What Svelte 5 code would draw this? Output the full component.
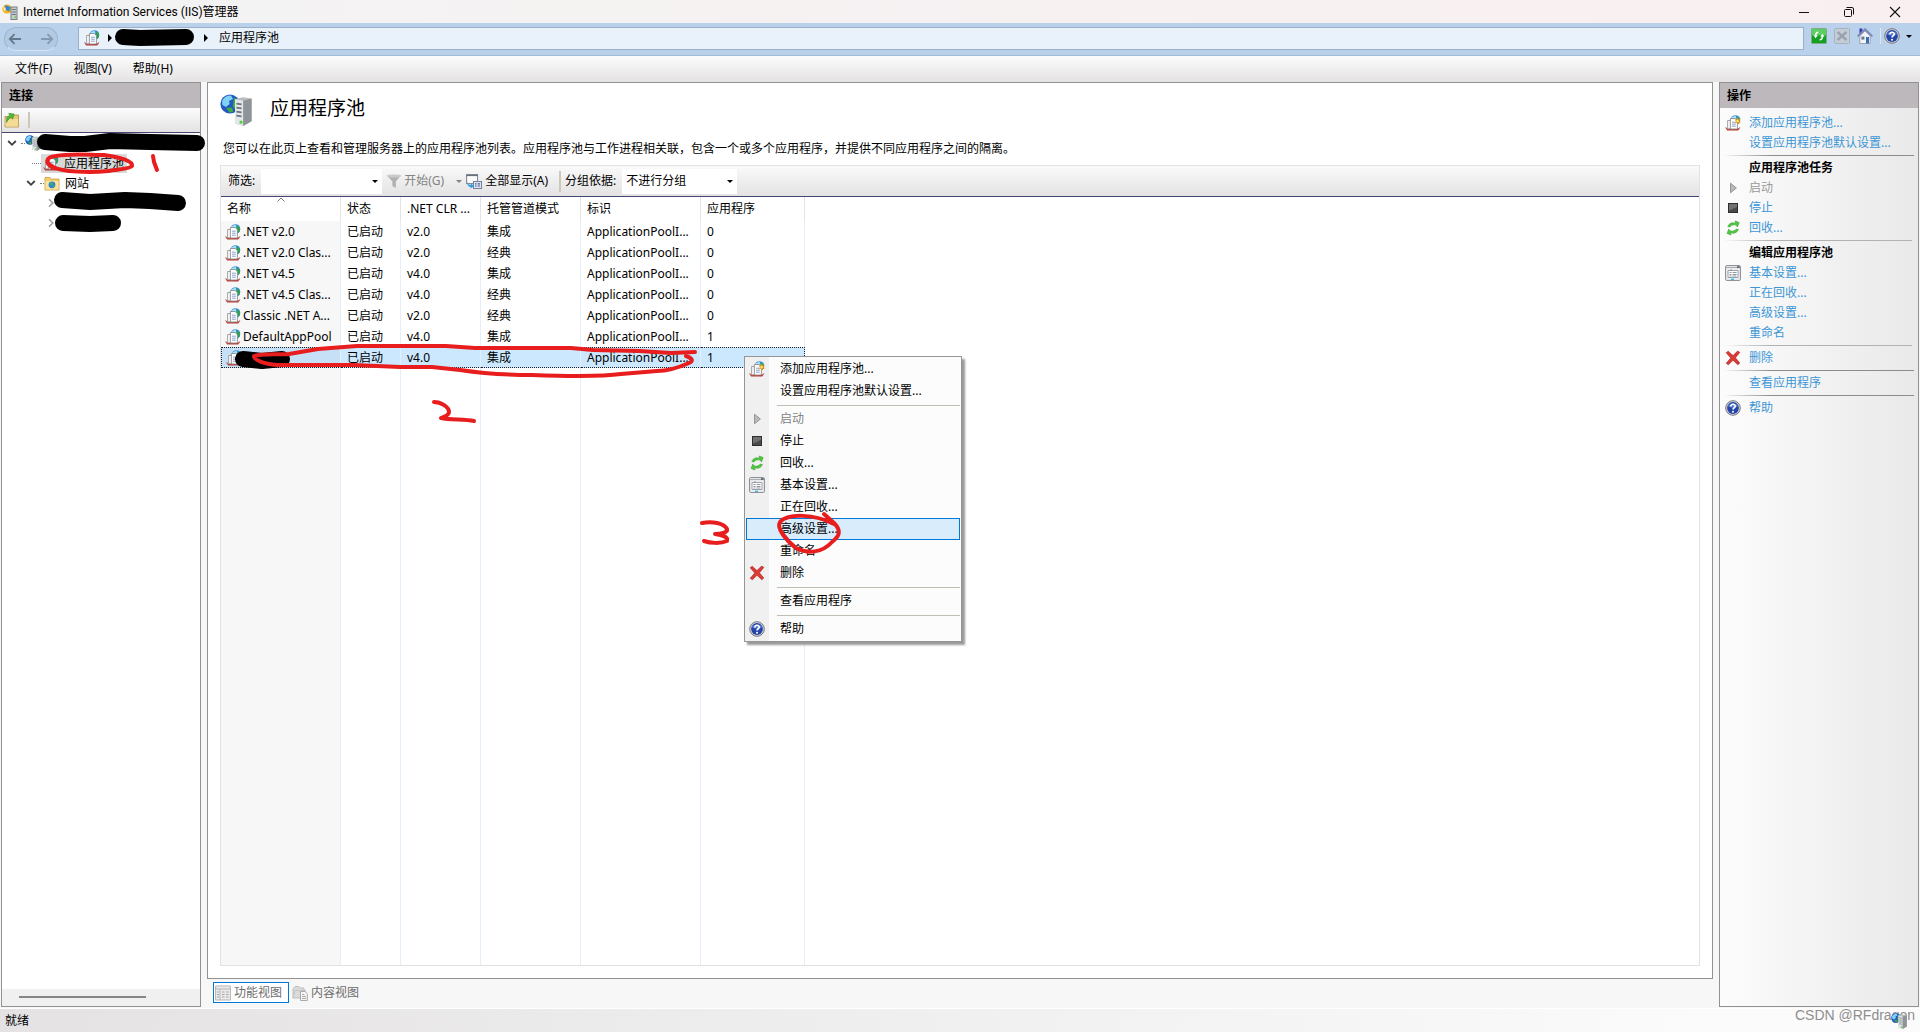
<script>
    const columns = ['名称', '状态', '.NET CLR ...', '托管管道模式', '标识', '应用程序'];

    const pools = [
        { name: '.NET v2.0', clr: 'v2.0', mode: '集成', apps: 0 },
        { name: '.NET v2.0 Clas...', clr: 'v2.0', mode: '经典', apps: 0 },
        { name: '.NET v4.5', clr: 'v4.0', mode: '集成', apps: 0 },
        { name: '.NET v4.5 Clas...', clr: 'v4.0', mode: '经典', apps: 0 },
        { name: 'Classic .NET A...', clr: 'v2.0', mode: '经典', apps: 0 },
        { name: 'DefaultAppPool', clr: 'v4.0', mode: '集成', apps: 1 },
        { name: '', clr: 'v4.0', mode: '集成', apps: 1 },
    ];

    const actions = [
        { text: '添加应用程序池...', icon: 'poolAdd' },
        { text: '设置应用程序池默认设置...' },
        { line: 'strong' },
        { heading: '应用程序池任务' },
        { text: '启动', icon: 'play', disabled: true },
        { text: '停止', icon: 'stop' },
        { text: '回收...', icon: 'recycle' },
        { line: 'soft' },
        { heading: '编辑应用程序池' },
        { text: '基本设置...', icon: 'settings' },
        { text: '正在回收...' },
        { text: '高级设置...' },
        { text: '重命名' },
        { line: 'soft' },
        { text: '删除', icon: 'remove' },
        { line: 'strong' },
        { text: '查看应用程序' },
        { line: 'strong' },
        { text: '帮助', icon: 'help' },
    ];

    // the context menu has the same entries without the headings
    const menu = [
        ...actions.slice(0, 3),
        ...actions.slice(4, 7),
        ...actions.slice(9, 13),
        ...actions.slice(14),
    ];

    let selected = $state(6);
    let hovered = $state('高级设置...');
</script>

{#snippet globe()}
    <circle cx="5" cy="5" r="4.8" fill="#2458c4" />
    <path d="M1 3.5C2 1.5 4 .6 5.5 .8L6.5 2.5 4.5 3.5 4.8 5 3 6.5 1.2 5.5Z" fill="#7fd3f4" />
    <path d="M7 1.6 9 3.5 9.4 6 7.6 7.6 6.4 6.2ZM3 7 6 6.8 6.6 8.8 5 9.4Z" fill="#3fae3a" />
{/snippet}

{#snippet icon(name, size = 16)}
    <svg class="icon" width={size} height={size} viewBox="0 0 16 16" aria-hidden="true">
        {#if name === 'server'}
            {@render globe()}
            <path d="M7.5 2.6 11.4 1.6 15.8 2.2V13.6L11.6 16 7.5 14.8Z" fill="#b9bdc0" />
            <path d="M7.5 2.6 11.6 3.4V16L7.5 14.8Z" fill="#e3e7ea" />
            <path d="M11.6 3.4 15.8 2.2V13.6L11.6 16Z" fill="#8f9498" />
            <path d="M8.2 4.8 10.8 5.2M8.2 6.8 10.8 7.2M8.2 8.8 10.8 9.2M8.2 10.8 10.8 11.2" stroke="#6d757b" stroke-width=".8" />
            <path d="M9.8 13.4h1.4v1.4H9.8z" fill="#4fd22f" />
        {:else if name === 'app'}
            <circle cx="5" cy="5" r="4.6" fill="#f2b21b" />
            <path d="M3 1 8.5 3 7 7.5 4 6Z" fill="#2f86d8" />
            <path d="M1 2.5 4 5 2.5 7.500Z" fill="#fff3bd" />
            <rect x="9" y="3" width="6" height="12.5" fill="#c5ccd0" stroke="#788087" />
            <path d="M10.2 5.5h3.6M10.2 8h3.6M10.2 10.5h3.6" stroke="#69737a" />
            <path d="M12.5 12.5h1.5v1.5h-1.5z" fill="#4fd22f" />
        {:else if name === 'pool' || name === 'poolAdd'}
            <circle cx="10.5" cy="5" r="4.8" fill="#3b8bdc" />
            <path d="M6.5 2.5 10.5 .4 11.4 3.5 8 5.5Z" fill="#a8e6f4" />
            <path d="M12 1.200 15 3.5 14.8 7.5 12.4 9Z" fill="#2fa34c" />
            <path d="M.6 12.6 2.2 15.2H13.2L15 12.6 13 13.8H2.6Z" fill="#d2322b" stroke="#b04540" stroke-width=".5" />
            <path d="M2.6 5.5h6v8.300h-6z" fill="#f7f7f7" stroke="#8f8f8f" stroke-width=".8" />
            <path d="M5.4 3.5h4.8l2.2 2.2v8.3h-7z" fill="#fff" stroke="#828282" stroke-width=".8" />
            <path d="M7 7.2h3.8M7 9.2h3.8M7 11.2h3.8" stroke="#6b8bc6" stroke-width=".8" />
            {#if name === 'poolAdd'}
                <path d="M12.5 2 13.2 4.4 15.6 3.8 14.2 5.8 16 7.4 13.6 7.4 13 10 11.8 7.8 9.4 8.4 11 6.4 9.6 4.4 11.8 4.6Z" fill="#f59a1c" />
                <circle cx="12.6" cy="6" r="1.2" fill="#ffe169" />
            {/if}
        {:else if name === 'play'}
            <path d="M5.5 3.2 11.4 8 5.5 12.8Z" fill="#b9b9b9" stroke="#979797" />
        {:else if name === 'stop'}
            <rect x="3.5" y="3.5" width="9" height="9" fill="#4a4a4a" stroke="#2e2e2e" />
            <path d="M4 4h8v3L4 10.5Z" fill="#717171" />
        {:else if name === 'recycle'}
            <path d="M2.8 6.5C4 3 8 2 10.5 3.4L10.2 1 14.2 2.6 12.4 7 11.4 5.2C8.6 4.4 6 5 5 7Z" fill="#4fc93d" stroke="#2c9526" stroke-width=".5" />
            <path d="M13.4 9.5C12.2 13 8.2 14 5.7 12.6L6 15 2 13.4 3.8 9 4.8 10.8C7.6 11.600 10.2 11 11.2 9Z" fill="#4fc93d" stroke="#2c9526" stroke-width=".5" />
        {:else if name === 'settings'}
            <rect x=".6" y=".6" width="14.8" height="14.8" rx="1" fill="#eef0f2" stroke="#84888d" />
            <path d="M1 2.6h14" stroke="#a4a8ae" />
            <path d="M12 1.2h2.6v1.6H12z" fill="#555b63" />
            <path d="M3 5.5h10v7H3z" fill="#fff" stroke="#9aa0a8" />
            <path d="M4.5 7.5h2M4.5 9.5h2M4.5 11h2M7.5 7.5h4M7.5 9.5h4M7.5 11h4M6 4v1.5" stroke="#848b95" stroke-width=".9" />
            <path d="M6 13.6h3v1.4H6z" fill="#38b9e8" />
        {:else if name === 'remove'}
            <path d="M1.2 2.8 3.2 1.2 8 5.6 12.6 1 14.8 2.4 10.4 7.8 14.8 13 12.8 14.8 8 10.2 3.4 14.8 1.2 13.2 5.8 8Z" fill="#dc3a35" stroke="#a51f1f" stroke-width=".6" />
        {:else if name === 'help'}
            <circle cx="8" cy="8" r="7.3" fill="#d5d5d8" stroke="#77787e" />
            <circle cx="8" cy="8" r="5.9" fill="#2345a8" />
            <path d="M3 6C4 2.5 12 2.5 13 6 11 8 5 8 3 6Z" fill="#5c80d6" />
            <path d="M5.8 6.4C5.8 3.4 10.4 3.6 10.2 6.3 10 7.8 8 7.8 8 9.6" fill="none" stroke="#fff" stroke-width="1.6" />
            <circle cx="8" cy="11.8" r="1" fill="#fff" />
        {:else if name === 'refresh'}
            <rect x=".5" y=".5" width="15" height="15" rx="1" fill="#29b53a" stroke="#7fa98a" />
            <path d="M1 1h14v6H1z" fill="#5dce62" />
            <path d="M1 8h14v7H1z" fill="#14a023" />
            <path d="M7.4 4.2C5 4.2 4.6 5.5 4.6 7.5M8.6 11.8C11 11.8 11.4 10.5 11.4 8.5" fill="none" stroke="#fff" stroke-width="1.4" />
            <path d="M2.4 7.2h4.4L4.6 10.2ZM9.2 8.8h4.4L11.4 5.800Z" fill="#fff" />
        {:else if name === 'cancel'}
            <rect x=".5" y=".5" width="15" height="15" rx="1" fill="#c4ccd5" stroke="#a7b2bf" />
            <path d="M3.5 4 12.5 12M12.5 4 3.5 12" stroke="#9aa4af" stroke-width="2.4" />
        {:else if name === 'home'}
            <path d="M2.8 8 8 3 13.2 8v7.5H2.8Z" fill="#f2f4f8" stroke="#8e96a6" stroke-width=".8" />
            <path d="M2.5 .5h2.8v4L2.5 7Z" fill="#2f3fb0" />
            <path d="M.6 8.4 8 1.2 15.4 8.4" fill="none" stroke="#7984b4" stroke-width="1.8" />
            <path d="M4.4 8.6h3v3h-3z" fill="#6d7990" />
            <path d="M9 9h3v6.5H9z" fill="#3a6fb8" />
        {:else if name === 'sites'}
            <path d="M1 2.5h5l1.4 1.6H15V15H1Z" fill="#f3cf72" stroke="#c89a3c" stroke-width=".8" />
            <path d="M1.5 6h13v8.5h-13z" fill="#fae49c" />
            <circle cx="8" cy="9.8" r="3.4" fill="#2f7fd0" />
            <path d="M6 8 8.4 7.2 8.6 9.6 6.8 10.8ZM8.5 11 10.6 9.6 10 12.4Z" fill="#4cbf58" />
        {:else if name === 'folder'}
            <path d="M1 4.500h5l1-1.500h7.500V15H1Z" fill="#e9c675" stroke="#b38e45" stroke-width=".8" />
            <path d="M1.5 7h12.6v7.6H1.5z" fill="#f4dc97" />
            <path d="M2.6 10.4C2.2 6.5 3.4 4.2 5.6 3.4L4.800 1.400 10.2 2 8.600 7.200 7.400 5.400C5.4 6 4 7.6 2.6 10.4Z" fill="#4cbd36" stroke="#2b8a22" stroke-width=".6" />
        {:else if name === 'filter'}
            <path d="M1 2.5H15L9.8 8.5V15L6.4 13V8.5Z" fill="#b0b0b0" />
            <ellipse cx="8" cy="3" rx="7" ry="1.6" fill="#c9c9c9" />
        {:else if name === 'showAll'}
            <rect x=".6" y="1.6" width="11" height="9" fill="#fafafa" stroke="#7a828c" />
            <path d="M.6 2.4h11" stroke="#67707c" stroke-width="1.4" />
            <rect x="7.5" y="8.5" width="8" height="7" fill="#dfe5ef" stroke="#7380a0" />
            <path d="M9 10.8h1.6M11.6 10.8h2.4M9 13h1.6M11.6 13h2.4" stroke="#4b5f9a" stroke-width="1.2" />
            <path d="M1 8.5C1.6 11.2 3 12 4.6 12V10.4L8.2 13 4.6 15.6V14C2 13.8 1 11.4 1 8.5Z" fill="#2f9be0" />
        {:else if name === 'features'}
            <path d="M.6 1h14.8v14H.6z" fill="#ececec" stroke="#b4b4b4" />
            <path d="M.6 4h14.8M5 4v11" stroke="#b4b4b4" />
            <path d="M2 7h2M2 9.5h2M2 12h2M7 7h2.6M11 7h2.6M7 9.5h2.6M11 9.5h2.6M7 12h2.6M11 12h2.6" stroke="#a4a4a4" />
        {:else if name === 'content'}
            <path d="M1 4 3 1.6H7L8 3H12V13H1Z" fill="#dadada" stroke="#bdbdbd" />
            <path d="M.8 13 3.2 5.5H14" fill="none" stroke="#c4c4c4" />
            <path d="M8.5 6.5h4.6l2.2 2.2v6.8H8.5z" fill="#f7f7f7" stroke="#a9a9a9" />
            <path d="M10 9.5h2.4M10 11.5h4M10 13.5h4" stroke="#a9a9a9" />
        {/if}
    </svg>
{/snippet}

{#snippet chevron(open)}
    <svg class="chevron" width="10" height="10" viewBox="0 0 10 10" aria-hidden="true">
        {#if open}
            <path d="M1.2 3 5 6.8 8.8 3" fill="none" stroke="#404040" stroke-width="1.8" />
        {:else}
            <path d="M3 1.2 6.8 5 3 8.8" fill="none" stroke="#a0a0a0" stroke-width="1.6" />
        {/if}
    </svg>
{/snippet}

<div class="window">
    <header class="titlebar">
        {@render icon('app')}
        <span class="caption">Internet Information Services (IIS)管理器</span>
        <button class="win" aria-label="最小化">
            <svg width="12" height="12" viewBox="0 0 12 12"><path d="M1 6.5h10" stroke="#111" /></svg>
        </button>
        <button class="win" aria-label="还原">
            <svg width="12" height="12" viewBox="0 0 12 12">
                <rect x="1.5" y="3.5" width="7" height="7" rx="1" fill="none" stroke="#111" />
                <path d="M3.5 1.5h5.5a1.5 1.5 0 0 1 1.5 1.5v5.5" fill="none" stroke="#111" />
            </svg>
        </button>
        <button class="win" aria-label="关闭">
            <svg width="12" height="12" viewBox="0 0 12 12"><path d="M1 1 11 11M11 1 1 11" stroke="#111" stroke-width="1.1" /></svg>
        </button>
    </header>

    <nav class="address">
        <div class="history">
            <button aria-label="后退">
                <svg width="14" height="12" viewBox="0 0 14 12"><path d="M13 6H2M6.5 1.2 1.8 6 6.5 10.8" fill="none" stroke="#66788c" stroke-width="1.8" /></svg>
            </button>
            <button aria-label="前进">
                <svg width="14" height="12" viewBox="0 0 14 12"><path d="M1 6H12M7.5 1.2 12.2 6 7.5 10.8" fill="none" stroke="#8699ae" stroke-width="1.8" /></svg>
            </button>
        </div>
        <div class="path">
            {@render icon('pool')}
            <i class="right"></i>
            <span class="host"></span>
            <i class="right"></i>
            <span>应用程序池</span>
        </div>
        <button class="tool" aria-label="刷新">{@render icon('refresh')}</button>
        <button class="tool" aria-label="停止">{@render icon('cancel')}</button>
        <button class="tool" aria-label="主页">{@render icon('home')}</button>
        <button class="tool help" aria-label="帮助">{@render icon('help')}<i class="down"></i></button>
    </nav>

    <div class="menubar">
        <button>文件(F)</button>
        <button>视图(V)</button>
        <button>帮助(H)</button>
    </div>

    <main>
        <aside class="panel connections">
            <h2>连接</h2>
            <div class="strip">
                <button class="tool" aria-label="连接">{@render icon('folder')}</button>
                <span class="sep"></span>
            </div>
            <ul class="tree">
                <li class="l1">{@render chevron(true)}<i class="dots"></i>{@render icon('server')}</li>
                <li class="l2"><i class="dots wide"></i><span class="node current">{@render icon('pool')}应用程序池</span></li>
                <li class="l3">{@render chevron(true)}<i class="dots"></i><span class="node">{@render icon('sites')}网站</span></li>
                <li class="l4">{@render chevron(false)}</li>
                <li class="l4">{@render chevron(false)}</li>
            </ul>
            <div class="scroll"><span></span></div>
        </aside>

        <section class="center">
            <div class="page">
                <div class="heading">
                    {@render icon('server', 32)}
                    <h1>应用程序池</h1>
                </div>
                <p>您可以在此页上查看和管理服务器上的应用程序池列表。应用程序池与工作进程相关联，包含一个或多个应用程序，并提供不同应用程序之间的隔离。</p>
                <div class="list">
                    <div class="filterbar">
                        <label for="filter">筛选:</label>
                        <div class="combo filter">
                            <input id="filter" type="text" />
                            <i class="down"></i>
                        </div>
                        <button class="go" disabled>{@render icon('filter')}开始(G)<i class="down"></i></button>
                        <button class="all">{@render icon('showAll')}全部显示(A)</button>
                        <span class="sep"></span>
                        <label for="group">分组依据:</label>
                        <div class="combo group">
                            <select id="group">
                                <option>不进行分组</option>
                            </select>
                            <i class="down"></i>
                        </div>
                    </div>
                    <div class="grid">
                        <table>
                            <thead>
                                <tr>
                                    {#each columns as column, i}
                                        <th>
                                            {column}
                                            {#if i === 0}
                                                <svg class="sort" width="8" height="5" viewBox="0 0 8 5" aria-hidden="true"><path d="M.5 4.5 4 1 7.5 4.5" fill="none" stroke="#777" /></svg>
                                            {/if}
                                        </th>
                                    {/each}
                                </tr>
                            </thead>
                            <tbody>
                                {#each pools as pool, i}
                                    <tr class:selected={selected === i} onclick={() => (selected = i)}>
                                        <td><span class="pool">{@render icon('pool')}{pool.name}</span></td>
                                        <td>已启动</td>
                                        <td>{pool.clr}</td>
                                        <td>{pool.mode}</td>
                                        <td>ApplicationPoolI...</td>
                                        <td>{pool.apps}</td>
                                    </tr>
                                {/each}
                                <tr class="rest">
                                    {#each columns as column}
                                        <td></td>
                                    {/each}
                                </tr>
                            </tbody>
                        </table>
                    </div>
                </div>
            </div>
            <div class="views">
                <button class="active">{@render icon('features')}功能视图</button>
                <button>{@render icon('content')}内容视图</button>
            </div>
        </section>

        <aside class="panel actions">
            <h2>操作</h2>
            <div class="items">
                {#each actions as action}
                    {#if action.line}
                        <hr class={action.line} />
                    {:else if action.heading}
                        <h3>{action.heading}</h3>
                    {:else}
                        <div class="item">
                            {#if action.icon}{@render icon(action.icon)}{/if}
                            {#if action.disabled}
                                <span>{action.text}</span>
                            {:else}
                                <a href="#top">{action.text}</a>
                            {/if}
                        </div>
                    {/if}
                {/each}
            </div>
        </aside>
    </main>

    <footer>
        <span>就绪</span>
        <span class="watermark">CSDN @RFdragon</span>
        <span class="corner">{@render icon('server')}</span>
    </footer>

    <div class="context" role="menu">
        {#each menu as item}
            {#if item.line}
                <hr />
            {:else}
                <button
                    role="menuitem"
                    class:hovered={hovered === item.text}
                    disabled={item.disabled}
                    onmouseenter={() => (hovered = item.text)}
                >
                    <span class="gutter">{#if item.icon}{@render icon(item.icon)}{/if}</span>
                    {item.text}
                </button>
            {/if}
        {/each}
    </div>

    <!-- pen marks over the window -->
    <svg class="marks" viewBox="0 0 1920 1032" width="1920" height="1032" aria-hidden="true">
        <g class="black">
            <path d="M123 37 140 38 186 37" />
            <path d="M45 142 70 144 85 144 110 141 150 142 197 143" />
            <path d="M62 200 90 202 125 200 150 201 178 203" />
            <path d="M63 223 90 224 113 223" />
            <path d="M243 359 262 361 282 359" />
        </g>
        <g class="red">
            <path d="M53 168C45 163 45 157 56 156 70 153 90 155 104 155 120 157 133 161 132 166 130 169 118 169 108 171 90 173 62 172 53 167 47 163 47 161 48 160" />
            <path d="M153 156 154 162 157 170" />
            <path d="M686 356C692 358 694 361 689 363 680 367 670 371 657 371L621 374C600 377 560 376 532 375 500 375 480 373 460 370L432 367 400 367 354 365 277 365C264 364 254 360 254 356 262 353 280 355 289 354L318 349 357 346 446 346 475 348 571 348 593 350 639 351 671 353 695 352" />
            <path d="M434 402C441 402 449 407 449 412 449 416 443 417 441 418 450 420 465 419 474 421" />
            <path d="M702 523C712 521 724 523 727 529 728 533 720 534 715 534 722 535 729 537 727 541 720 544 710 543 704 541" />
            <path d="M824 514 834 523C843 532 838 537 832 542 822 553 808 554 796 548 786 540 776 528 780 522 788 513 815 514 834 524" />
        </g>
    </svg>
</div>

<style>
    :global(body) {
        margin: 0;
    }

    .window {
        position: relative;
        display: flex;
        flex-direction: column;
        height: 100vh;
        overflow: hidden;
        background: #f7f7f7;
        color: #000;
        font-family: "Noto Sans", "Noto Sans CJK SC", sans-serif;
        font-size: 12px;
        line-height: 20px;
    }

    .window * {
        box-sizing: border-box;
    }

    button,
    input,
    select {
        margin: 0;
        padding: 0;
        border: 0;
        background: none;
        color: inherit;
        font: inherit;
    }

    h1,
    h2,
    h3,
    p,
    ul {
        margin: 0;
        padding: 0;
        list-style: none;
    }

    .icon,
    .chevron {
        flex: none;
        display: block;
    }

    .titlebar {
        flex: none;
        display: flex;
        align-items: center;
        height: 23px;
        padding: 0 1px 0 2px;
        background: linear-gradient(90deg, #f3f3f3, #f9eff0);
    }

    .caption {
        flex: 1;
        padding-left: 5px;
        font-family: Roboto, "Noto Sans CJK SC", sans-serif;
    }

    .win {
        display: flex;
        align-items: center;
        justify-content: center;
        width: 45px;
        height: 20px;
    }

    .win:last-child {
        width: 48px;
    }

    .address {
        flex: none;
        display: flex;
        align-items: flex-start;
        gap: 7px;
        height: 33px;
        padding: 4px 8px 0 4px;
        border-bottom: 1px solid #a3bcd6;
        background: #b9d1ea;
    }

    .history {
        display: flex;
        justify-content: space-between;
        align-items: center;
        width: 54px;
        height: 24px;
        margin-right: 13px;
        padding: 0 3px;
        border: 1px solid #9db6d0;
        border-bottom-color: #d6e5f5;
        border-radius: 12px;
        background: #b2cae3;
    }

    .history button {
        display: flex;
    }

    .path {
        flex: 1;
        display: flex;
        align-items: center;
        height: 23px;
        padding: 0 0 1px 5px;
        border: 1px solid #9bb0c6;
        background: #e9f1fa;
    }

    .right {
        margin: 0 0 0 8px;
        border: 4px solid transparent;
        border-left-color: #000;
        border-right: 0;
    }

    .host {
        width: 84px;
    }

    .host ~ span {
        padding-left: 11px;
    }

    .down {
        flex: none;
        border: 3px solid transparent;
        border-top-color: currentColor;
        border-bottom: 0;
    }

    .tool {
        display: flex;
        align-items: center;
        margin-top: 1px;
    }

    .help {
        gap: 6px;
        padding-left: 3px;
        border-left: 1px solid #dde8f3;
    }

    .menubar {
        flex: none;
        display: flex;
        gap: 21px;
        height: 26px;
        padding-left: 15px;
        background: linear-gradient(#fcfcfc, #e4e2e3);
    }

    main {
        flex: 1;
        display: flex;
        min-height: 0;
        padding: 0 1px;
    }

    .panel {
        flex: none;
        display: flex;
        flex-direction: column;
        width: 200px;
        margin-bottom: 1px;
        border: 1px solid #929292;
        background: #fff;
    }

    h2 {
        height: 25px;
        padding-left: 7px;
        background: #bcb8bb;
        font-size: 12px;
        line-height: 26px;
    }

    .strip {
        display: flex;
        align-items: center;
        gap: 8px;
        height: 25px;
        padding-left: 2px;
        border-bottom: 1px solid #464672;
        background: linear-gradient(#fcfcfc, #e4e2e3);
    }

    .strip .tool {
        margin: 0;
    }

    .sep {
        flex: none;
        width: 2px;
        height: 16px;
        background: #cbc9b8;
    }

    .tree {
        flex: 1;
    }

    .tree li {
        display: flex;
        align-items: center;
        height: 20px;
    }

    .l1 {
        padding-left: 5px;
    }

    .l2 {
        padding-left: 30px;
    }

    .l3 {
        padding-left: 24px;
    }

    .l4 {
        padding-left: 44px;
    }

    .dots {
        width: 4px;
        margin: 0 0 0 4px;
        border-top: 1px dotted #808080;
    }

    .dots.wide {
        width: 9px;
        margin: 0;
    }

    .node {
        display: flex;
        align-items: center;
        gap: 5px;
        padding: 0 3px 0 2px;
        line-height: 19px;
    }

    .l3 .node {
        padding-left: 0;
    }

    .current {
        background: #d9d9d9;
    }

    .scroll {
        height: 17px;
        padding: 7px 54px 0 17px;
        background: #f0f0f0;
    }

    .scroll span {
        display: block;
        height: 2px;
        background: #868686;
    }

    .center {
        flex: 1;
        display: flex;
        flex-direction: column;
        min-width: 0;
        margin: 0 6px;
    }

    .page {
        flex: 1;
        display: flex;
        flex-direction: column;
        padding: 10px 12px;
        border: 1px solid #929292;
        background: #fff;
    }

    .heading {
        display: flex;
        align-items: center;
        gap: 18px;
        height: 34px;
    }

    h1 {
        align-self: flex-start;
        font-size: 19px;
        font-weight: 400;
        line-height: 30px;
    }

    p {
        margin: 12px 0 6px;
        padding-left: 3px;
    }

    .list {
        flex: 1;
        display: flex;
        flex-direction: column;
        margin-bottom: 2px;
        border: 1px solid #e2e2e2;
    }

    .filterbar {
        display: flex;
        align-items: center;
        height: 31px;
        padding-left: 7px;
        border-bottom: 1px solid #464672;
        background: linear-gradient(#fafafa, #e4e2e3);
    }

    .combo {
        display: flex;
        align-items: center;
        height: 25px;
        margin-left: 6px;
        padding-right: 4px;
        background: #fff;
    }

    .filter {
        width: 121px;
    }

    .group {
        width: 115px;
        padding-left: 4px;
    }

    .combo input,
    .combo select {
        flex: 1;
        min-width: 0;
        appearance: none;
        outline: 0;
    }

    .go,
    .all {
        display: flex;
        align-items: center;
        margin-left: 4px;
    }

    .go {
        gap: 2px;
        color: #838383;
    }

    .go .down {
        margin-left: 10px;
    }

    .all {
        gap: 3px;
    }

    .filterbar .sep {
        height: 21px;
        margin: 0 4px 0 11px;
    }

    .grid {
        flex: 1;
        display: flex;
    }

    table {
        width: 584px;
        height: 100%;
        table-layout: fixed;
        border-collapse: separate;
        border-spacing: 0;
    }

    th,
    td {
        position: relative;
        height: 21px;
        padding: 0 0 0 6px;
        border-right: 1px solid #e6eefb;
        font-weight: 400;
        text-align: left;
        white-space: nowrap;
    }

    th {
        height: 24px;
        border-right-color: #e4e4e4;
    }

    th:nth-child(1) {
        width: 120px;
    }

    th:nth-child(2) {
        width: 60px;
    }

    th:nth-child(3) {
        width: 80px;
    }

    th:nth-child(4) {
        width: 100px;
    }

    th:nth-child(5) {
        width: 120px;
    }

    td:first-child {
        padding-left: 4px;
        background: #f7f7f7;
    }

    .pool {
        display: flex;
        align-items: center;
        gap: 2px;
    }

    .sort {
        position: absolute;
        top: 0;
        left: 56px;
    }

    .selected td {
        border-top: 1px dotted #222;
        border-bottom: 1px dotted #222;
        background: #cce8ff;
        line-height: 19px;
    }

    .selected td:first-child {
        border-left: 1px dotted #222;
        background: #c5e0f7;
    }

    .selected td:last-child {
        border-right: 1px dotted #222;
    }

    .rest td {
        height: auto;
    }

    .views {
        display: flex;
        gap: 1px;
        height: 29px;
        padding: 3px 6px 5px;
        color: #6d6d6d;
    }

    .views button {
        display: flex;
        align-items: center;
        gap: 3px;
        padding: 0 6px 0 1px;
        border: 1px solid transparent;
    }

    .views .active {
        border-color: #0078d7;
        background: #fff;
    }

    .actions {
        background: linear-gradient(90deg, #fcfcfc, #e9e9e9);
    }

    .items {
        padding: 5px 4px 0 3px;
    }

    .item {
        display: flex;
        align-items: center;
        height: 20px;
        padding-left: 26px;
        color: #9a9a9a;
    }

    .item .icon {
        margin: 0 8px 0 -24px;
    }

    .item a {
        color: #3c96d6;
        text-decoration: none;
    }

    h3 {
        padding-left: 26px;
        font-size: 12px;
    }

    hr {
        height: 1px;
        margin: 2px 0;
        border: 0;
        background: linear-gradient(90deg, transparent, #8c8c8c 25%);
    }

    hr.soft {
        margin-right: 2px;
        background: linear-gradient(90deg, transparent, #b2b2b2 25%);
    }

    footer {
        flex: none;
        display: flex;
        align-items: center;
        height: 24px;
        padding: 0 13px 0 5px;
        border-top: 1px solid #fff;
        background: linear-gradient(90deg, #e4e2e3, #fbfbfb 90%);
    }

    .watermark {
        margin: -12px 0 0 auto;
        color: #8e8e8e;
        font-family: "Liberation Sans", sans-serif;
        font-size: 14px;
    }

    .corner {
        margin: 0 0 0 -24px;
    }

    .context {
        position: absolute;
        top: 356px;
        left: 744px;
        width: 218px;
        padding: 1px;
        border: 1px solid #959595;
        background: linear-gradient(90deg, #f0f0f0 24px, #fcfcfc 24px);
        box-shadow: 3px 3px 2px #999;
    }

    .context button {
        display: flex;
        align-items: center;
        width: 100%;
        height: 22px;
        border: 1px solid transparent;
        text-align: left;
    }

    .context button:disabled {
        color: #838383;
    }

    .context .hovered {
        border-color: #0078d7;
        background: #d8ecfc;
    }

    .gutter {
        width: 33px;
        padding-left: 2px;
    }

    .context hr {
        margin: 3px 0 2px 31px;
        background: #bfbfb2;
    }

    .marks {
        position: absolute;
        top: 0;
        left: 0;
        fill: none;
        stroke-linecap: round;
        stroke-linejoin: round;
        pointer-events: none;
    }

    .black {
        stroke: #000;
        stroke-width: 16px;
    }

    .red {
        stroke: #e81e1e;
        stroke-width: 4px;
    }
</style>
